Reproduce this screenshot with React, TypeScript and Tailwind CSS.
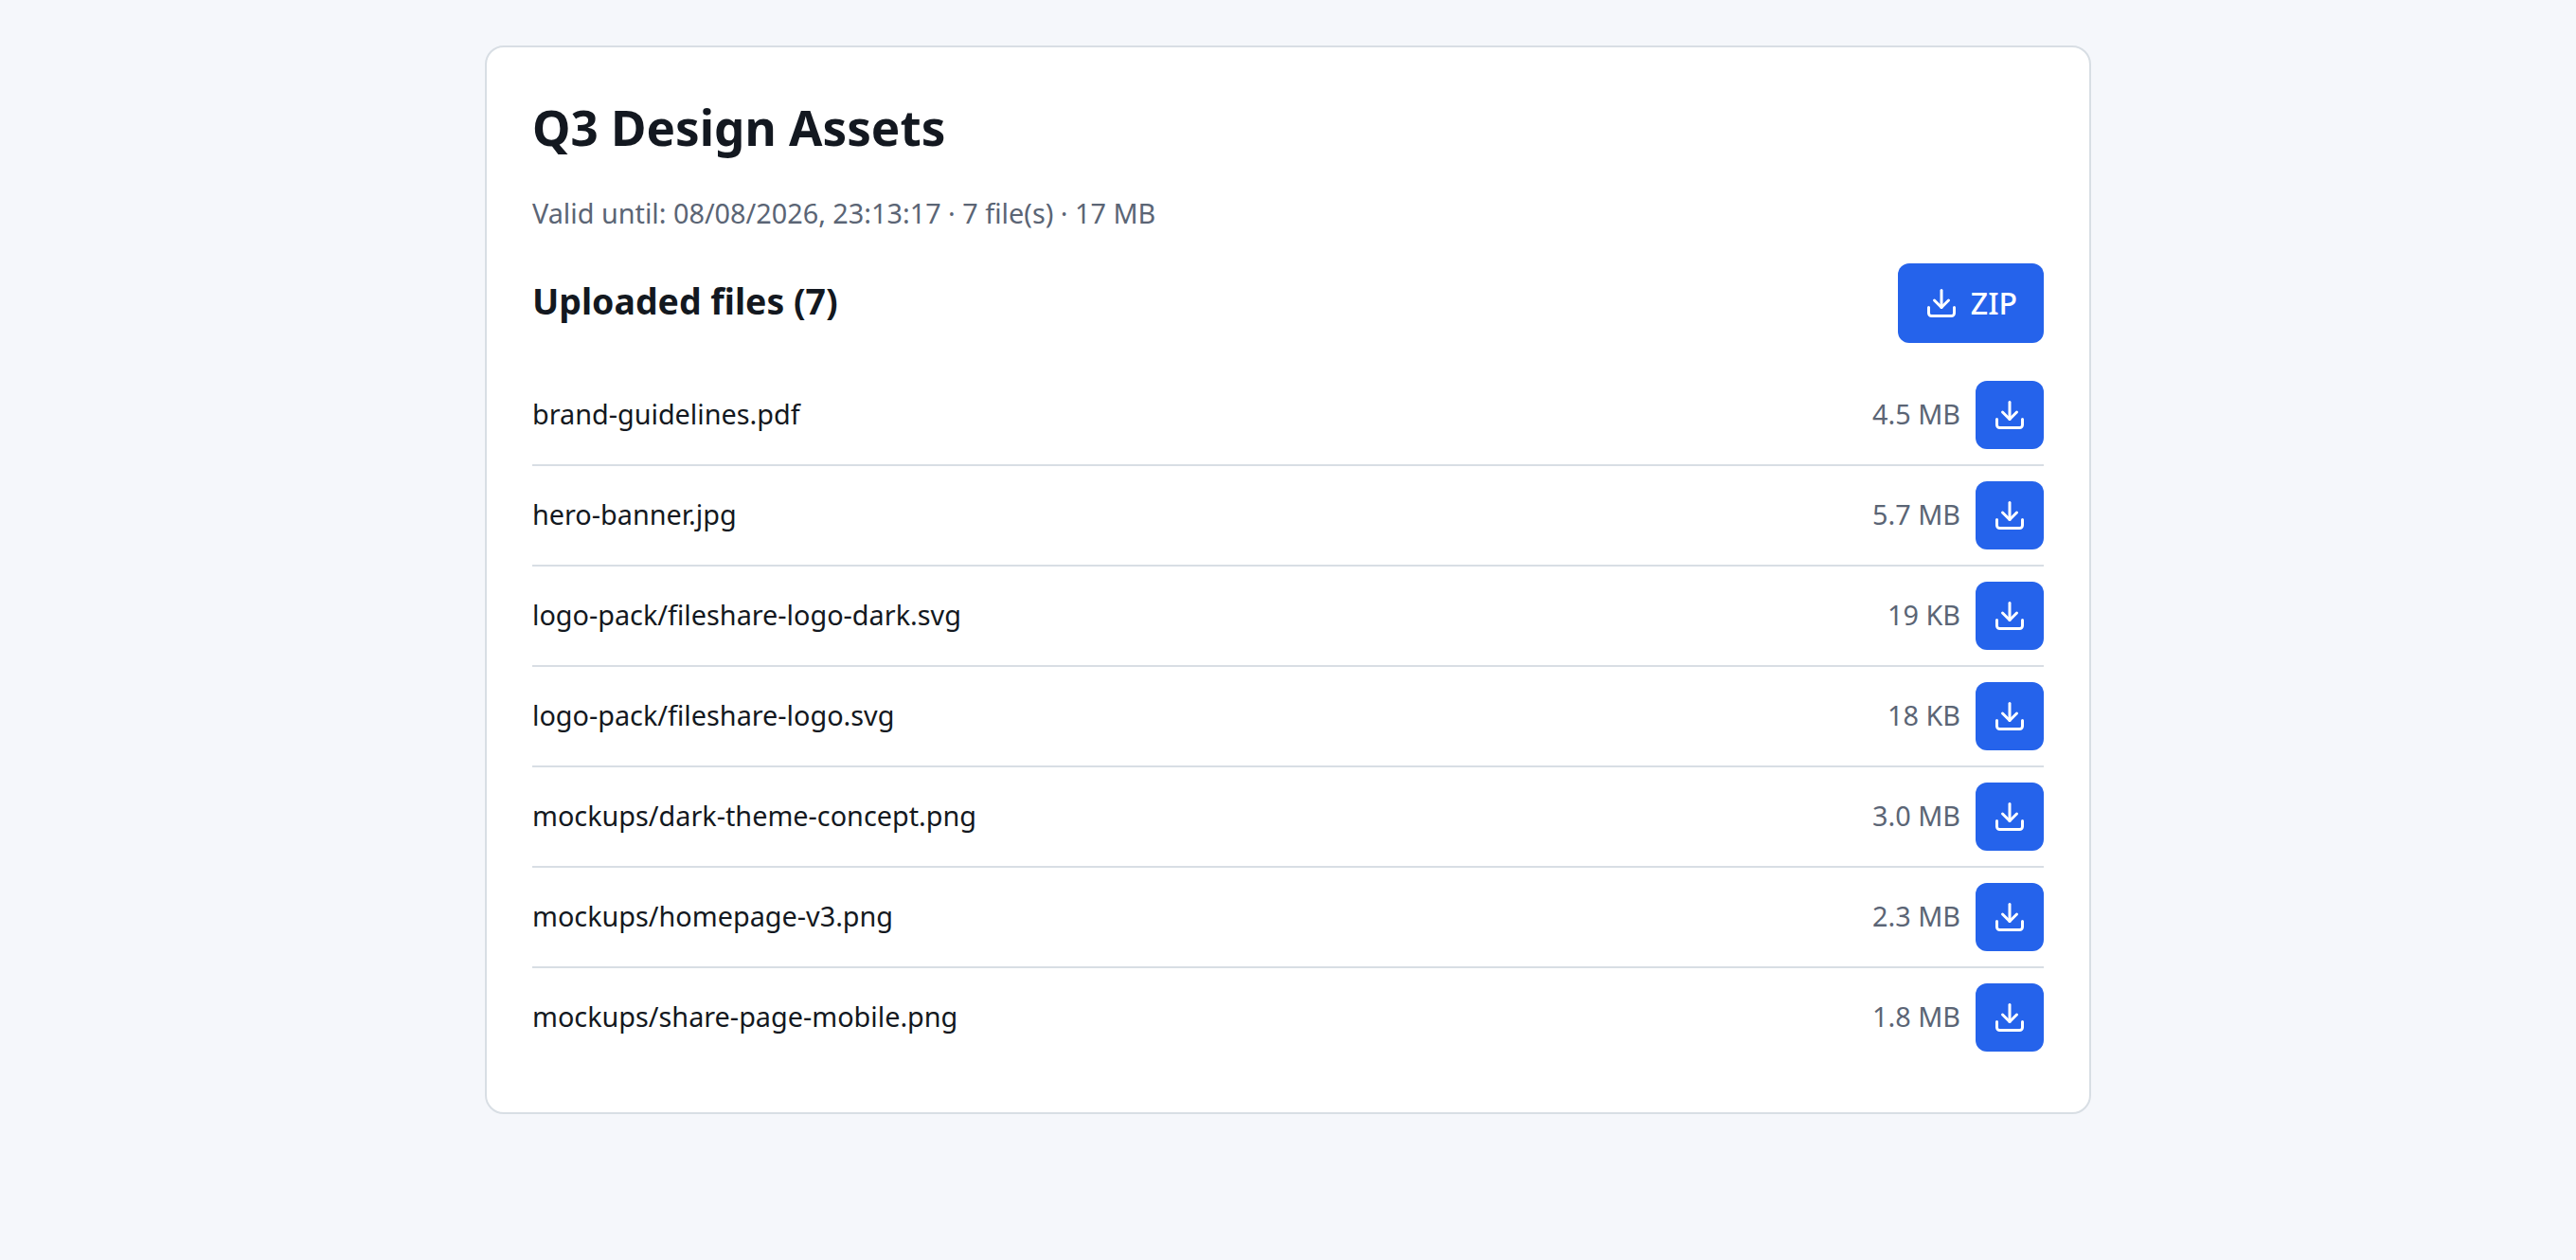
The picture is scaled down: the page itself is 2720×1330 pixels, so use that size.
import { Download } from 'lucide-react'

interface SharedFile {
  path: string
  size: string
}

const files: SharedFile[] = [
  { path: 'brand-guidelines.pdf', size: '4.5 MB' },
  { path: 'hero-banner.jpg', size: '5.7 MB' },
  { path: 'logo-pack/fileshare-logo-dark.svg', size: '19 KB' },
  { path: 'logo-pack/fileshare-logo.svg', size: '18 KB' },
  { path: 'mockups/dark-theme-concept.png', size: '3.0 MB' },
  { path: 'mockups/homepage-v3.png', size: '2.3 MB' },
  { path: 'mockups/share-page-mobile.png', size: '1.8 MB' },
]

function FileRow({ file }: { file: SharedFile }) {
  return (
    <li className="flex items-center gap-4 py-4 border-b-2 border-[#d8dee4] last:border-b-0">
      <span className="flex-1 truncate pb-0.5 text-[28.8px] leading-[40px]">{file.path}</span>
      <span className="pb-0.5 text-[28.8px] leading-[40px] text-[#5b6575]">{file.size}</span>
      <button aria-label={`Download ${file.path}`} className="size-18 flex items-center justify-center rounded-xl bg-[#2563eb] text-white">
        <Download size={36} />
      </button>
    </li>
  )
}

export default function App() {
  return (
    <div className="min-h-screen bg-[#f5f7fb] pt-12 font-['Noto_Sans',sans-serif] text-[#131820]">
      <main className="w-[1696px] mx-auto p-12 bg-white border-2 border-[#d8dee4] rounded-[20px]">
        <h1 className="text-[51.2px] leading-[72px] font-bold">Q3 Design Assets</h1>
        <p className="mt-[35px] mb-[33px] text-[28.8px] leading-[40px] text-[#5b6575]">
          Valid until: 08/08/2026, 23:13:17 · 7 file(s) · 17 MB
        </p>
        <div className="mb-6 flex items-center justify-between">
          <h2 className="pb-1 text-[37.44px] leading-[52px] font-bold">Uploaded files ({files.length})</h2>
          <button className="flex items-center gap-[13px] h-21 px-7 rounded-xl bg-[#2563eb] text-white text-[32px] leading-[44px] font-medium">
            <Download size={36} />
            ZIP
          </button>
        </div>
        <ul>
          {files.map(f => <FileRow key={f.path} file={f} />)}
        </ul>
      </main>
    </div>
  )
}
